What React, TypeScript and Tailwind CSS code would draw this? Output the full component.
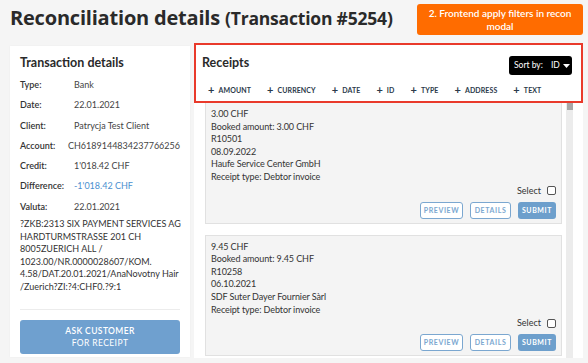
import React from 'react'

const font = { fontFamily: 'Lato, "Open Sans", Arial, sans-serif' }
const titleFont = { fontFamily: '"Open Sans", Lato, Arial, sans-serif' }

const details: [string, string, boolean?][] = [
  ['Type:', 'Bank'],
  ['Date:', '22.01.2021'],
  ['Client:', 'Patrycja Test Client'],
  ['Account:', 'CH6189144834237766256'],
  ['Credit:', "1'018.42 CHF"],
  ['Difference:', "-1'018.42 CHF", true],
  ['Valuta:', '22.01.2021'],
]

const memo = [
  '?ZKB:2313 SIX PAYMENT SERVICES AG',
  'HARDTURMSTRASSE 201 CH',
  '8005ZUERICH ALL /',
  '1023.00/NR.0000028607/KOM.',
  '4.58/DAT.20.01.2021/AnaNovotny Hair',
  '/Zuerich?ZI:?4:CHF0.?9:1',
]

const filters = ['Amount', 'Currency', 'Date', 'ID', 'Type', 'Address', 'Text']

const receipts = [
  {
    amount: '3.00 CHF',
    id: 'R10501',
    date: '08.09.2022',
    name: 'Haufe Service Center GmbH',
  },
  {
    amount: '9.45 CHF',
    id: 'R10258',
    date: '06.10.2021',
    name: 'SDF Suter Dayer Fournier Sàrl',
  },
]

function ReceiptCard({ r, first }: { r: (typeof receipts)[number]; first?: boolean }) {
  return (
    <div
      className={`bg-[#f4f4f4] border border-[#e1e1e1] px-[5px] pt-[5px] pb-[4px] ${first ? 'border-t-0' : ''}`}
    >
      <div className="text-[9px] leading-[12.6px] tracking-[-0.1px] text-[#333]">
        <div>{r.amount}</div>
        <div>Booked amount: {r.amount}</div>
        <div>{r.id}</div>
        <div>{r.date}</div>
        <div>{r.name}</div>
        <div>Receipt type: Debtor invoice</div>
      </div>
      <div className="flex justify-end items-center gap-[6px] mt-[1px] h-[12px] text-[9px] text-[#333]">
        <span>Select</span>
        <span className="w-[9px] h-[9px] border border-[#555] rounded-[2px] bg-white" />
      </div>
      <div className="flex justify-end gap-[7px] mt-[5px]">
        <button className="h-[17px] w-[43px] border border-[#7ba7d0] rounded-[3px] bg-white text-[#7ba7d0] text-[7px] font-bold tracking-[0.6px]">
          PREVIEW
        </button>
        <button className="h-[17px] w-[41px] border border-[#7ba7d0] rounded-[3px] bg-white text-[#7ba7d0] text-[7px] font-bold tracking-[0.6px]">
          DETAILS
        </button>
        <button className="h-[17px] w-[38px] rounded-[3px] bg-[#6d9fcc] text-white text-[7px] font-bold tracking-[0.6px]">
          SUBMIT
        </button>
      </div>
    </div>
  )
}

export default function App() {
  return (
    <div className="w-[588px] h-[363px] bg-[#f5f5f5] overflow-hidden text-[#2a2a2a]" style={font}>
      <div className="flex justify-between items-start h-[43px] pl-[10px] pr-[5px] pt-[4px]">
        <h1 className="font-bold text-[20px] leading-[28px] whitespace-nowrap tracking-[-0.2px]" style={titleFont}>
          Reconciliation details <span className="text-[17.5px]">(Transaction #5254)</span>
        </h1>
        <div className="w-[166px] h-[31px] bg-[#ff6c00] rounded-[3px] text-white text-[10px] font-semibold leading-[12.7px] text-center pt-[3px]">
          2. Frontend apply filters in recon
          <br />
          modal
        </div>
      </div>

      <div className="flex items-start gap-[4px] pl-[10px]">
        <div className="mt-[3px] w-[180px] h-[311px] bg-white px-[10px] pt-[7px] shadow-[0_0_2px_rgba(0,0,0,0.04)]">
          <div className="text-[12.5px] font-bold leading-[20px]">Transaction details</div>
          <div className="mt-[2px]">
            {details.map(([label, value, blue]) => (
              <div key={label} className="flex text-[9px] leading-[20.3px]">
                <span className="w-[54px] font-semibold text-[#333]">{label}</span>
                <span className={blue ? 'text-[#4b8fd0]' : 'text-[#444]'}>{value}</span>
              </div>
            ))}
          </div>
          <div className="flex justify-between mt-[1px]">
            <div className="text-[9px] leading-[12.5px] text-[#333] whitespace-nowrap">
              {memo.map((l) => (
                <div key={l}>{l}</div>
              ))}
            </div>
            <div className="w-[6px] h-[72px] bg-[#a8a8a8] rounded-[1px]" />
          </div>
          <div className="mt-[16px] border-t border-[#ececec]" />
          <button className="mt-[10px] w-[160px] h-[34px] rounded-[3px] bg-[#6fa0cf] text-white text-[8.5px] font-semibold tracking-[0.4px] leading-[12px]">
            ASK CUSTOMER
            <br />
            <span className="font-normal">FOR RECEIPT</span>
          </button>
        </div>

        <div className="w-[389px] h-[315px] bg-white">
          <div className="h-[60px] border-2 border-[#e93a2b] pt-[8px] pr-[9px]">
            <div className="flex justify-between items-start">
              <div className="pl-[6px] text-[12.5px] font-bold leading-[20px]">Receipts</div>
              <div className="mt-[3px] h-[19px] w-[63px] bg-black rounded-[3px] text-white text-[8.5px] flex items-center pl-[5px] gap-[8px]">
                <span>Sort by:</span>
                <span className="flex items-center gap-[3px]">
                  ID
                  <svg width="7" height="4" viewBox="0 0 7 4">
                    <path d="M0 0h7L3.5 4z" fill="white" />
                  </svg>
                </span>
              </div>
            </div>
            <div className="flex gap-[16px] pl-[12px] mt-[9px] leading-[12px] text-[#2b3a4a]">
              {filters.map((f) => (
                <div key={f} className="flex items-center gap-[4px] text-[7px] font-bold uppercase tracking-[0.1px]">
                  <span className="text-[11px] leading-[12px]">+</span>
                  {f}
                </div>
              ))}
            </div>
          </div>
          <div className="flex gap-[4px] pl-[11px] h-[255px]">
            <div className="w-[357px] flex flex-col gap-[11px]">
              <ReceiptCard r={receipts[0]} first />
              <ReceiptCard r={receipts[1]} />
            </div>
            <div className="w-[7px] h-[255px] bg-[#ececec] flex justify-center">
              <div className="w-[6px] h-[7px] bg-[#a8a8a8]" />
            </div>
          </div>
        </div>
      </div>
    </div>
  )
}
